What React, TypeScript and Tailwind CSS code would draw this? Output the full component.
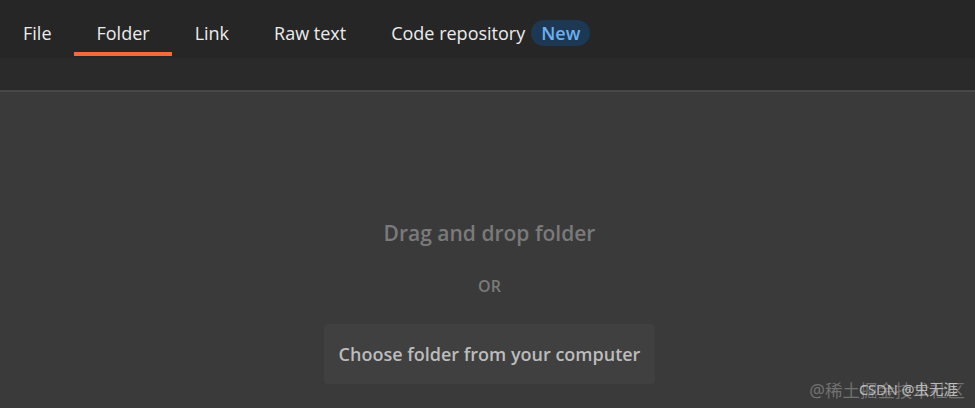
const tabs = ["File", "Folder", "Link", "Raw text", "Code repository"];

export default function App() {
  return (
    <div
      className="relative w-[975px] h-[408px] overflow-hidden flex flex-col bg-[#3a3a3a]"
      style={{ fontFamily: '"Open Sans", "Noto Sans", sans-serif' }}
    >
      <div className="flex flex-col bg-[#262626]">
        <div className="flex items-stretch h-[58px] pl-[0.5px]">
          {tabs.map((t) => (
            <div
              key={t}
              className={`relative flex items-start pt-[21px] px-[22.5px] text-[18px] leading-[24px] text-[#ececec] ${
                t === "Code repository" ? "pr-0" : ""
              }`}
            >
              <span>{t}</span>
              {t === "Folder" && (
                <div className="absolute left-0 right-0 bottom-[2px] h-[4px] bg-[#f26b3a]" />
              )}
            </div>
          ))}
          <div className="flex items-start pt-[20px] ml-[6px]">
            <span className="flex items-center justify-center h-[26px] px-[10px] rounded-full bg-[#1d3853] text-[#6bb0f0] text-[18px] font-semibold">
              New
            </span>
          </div>
        </div>
        <div className="h-[34px] bg-[#2a2a2a] border-b-2 border-[#484848]" />
      </div>
      <div className="flex-1 flex flex-col items-center pt-[126px] pl-[4px]">
        <div className="text-[21px] leading-[30px] text-[#7a7a7a] font-semibold">Drag and drop folder</div>
        <div className="mt-[27px] text-[16px] leading-[22px] font-semibold text-[#7a7a7a]">OR</div>
        <button className="mt-[27px] h-[60px] px-[15px] rounded bg-[#404040] text-[18px] font-semibold text-[#bcbcbc]">
          Choose folder from your computer
        </button>
      </div>
      <div className="absolute right-[10px] bottom-[5px] text-[17.5px] text-[#8a8a8a]/70" style={{ fontFamily: '"Noto Sans", "Noto Sans CJK SC", sans-serif' }}>
        @稀土掘金技术社区
      </div>
      <div className="absolute right-[17px] bottom-[7px] text-[14.5px] text-[#d8d8d8]/80" style={{ fontFamily: '"Noto Sans", "Noto Sans CJK SC", sans-serif' }}>
        CSDN @虫无涯
      </div>
    </div>
  );
}
